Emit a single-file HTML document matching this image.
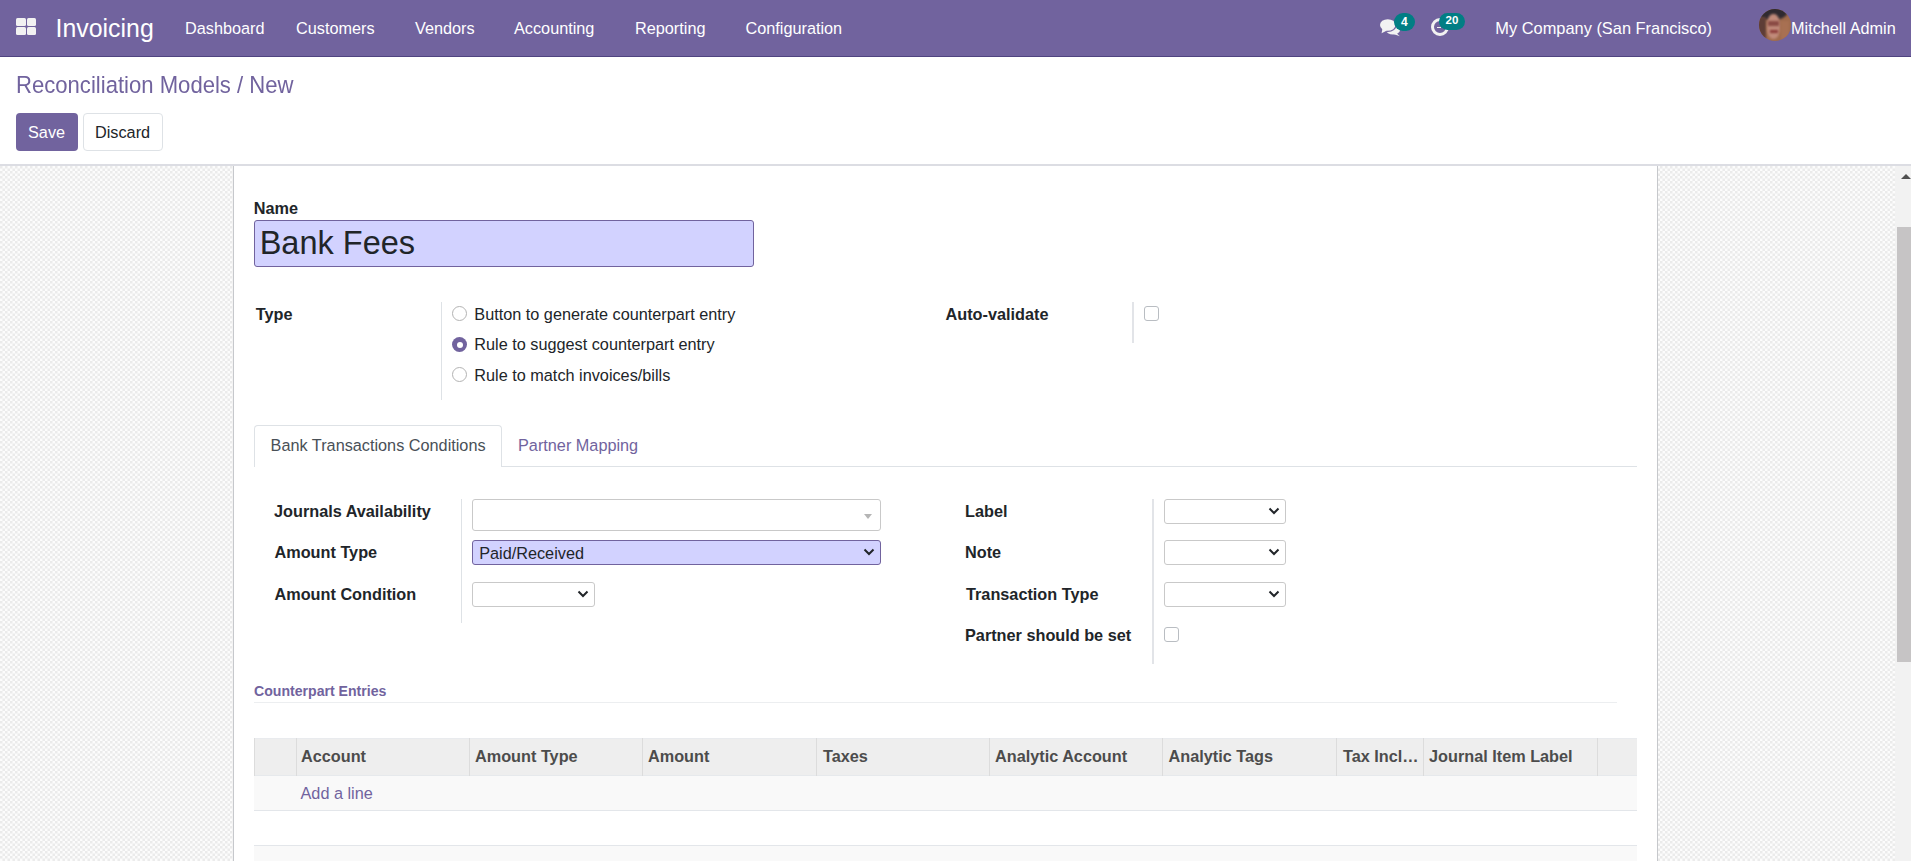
<!DOCTYPE html>
<html><head><meta charset="utf-8">
<style>
*{box-sizing:border-box;margin:0;padding:0}
html,body{width:1911px;height:861px;overflow:hidden;background:#fff;font-family:"Liberation Sans",sans-serif;color:#212529}
.a{position:absolute}
.t{position:absolute;white-space:nowrap;line-height:0}
.nav{position:absolute;left:0;top:0;width:1911px;height:57px;background:#71639e;border-bottom:1px solid #4f4480}
.nav .t{color:#fff;font-size:16.25px}
.cp{position:absolute;left:0;top:57px;width:1911px;height:109px;background:#fff;border-bottom:2px solid #dcdde3}
.content{position:absolute;left:0;top:166px;width:1911px;height:695px;background-color:#f5f5f5}
.sheet{position:absolute;left:233px;top:166px;width:1425px;height:700px;background:#fff;border-left:1px solid #c6c8cc;border-right:1px solid #c6c8cc}
.lbl{font-weight:bold;font-size:16.25px;color:#212529}
.sep{position:absolute;width:1px;background:#dee2e6}
.sel{position:absolute;border:1px solid #c9c9c9;border-radius:3px;background:#fff}
.chev{position:absolute;width:12px;height:8px}
.radio{position:absolute;width:15px;height:15px;border-radius:50%;border:1px solid #b3b3b3;background:#fff}
.chk{position:absolute;width:15px;height:15px;border-radius:3px;border:1px solid #b9bdc2;background:#fff}
</style></head><body>
<div class="nav">
<div class="a" style="left:16px;top:18px;width:9.5px;height:8.3px;background:#f2f2f2;border-radius:1.5px"></div>
<div class="a" style="left:26.5px;top:18px;width:9.5px;height:8.3px;background:#f2f2f2;border-radius:1.5px"></div>
<div class="a" style="left:16px;top:27px;width:9.5px;height:8px;background:#f2f2f2;border-radius:1.5px"></div>
<div class="a" style="left:26.5px;top:27px;width:9.5px;height:8px;background:#f2f2f2;border-radius:1.5px"></div>
<div class="t" style="left:55.5px;top:28px;font-size:24.9px">Invoicing</div>
<div class="t" style="left:185px;top:28px">Dashboard</div>
<div class="t" style="left:296px;top:28px">Customers</div>
<div class="t" style="left:415px;top:28px">Vendors</div>
<div class="t" style="left:514px;top:28px">Accounting</div>
<div class="t" style="left:635px;top:28px">Reporting</div>
<div class="t" style="left:745.5px;top:28px">Configuration</div>
<svg class="a" style="left:1379px;top:18px" width="22" height="19" viewBox="0 0 22 19">
<ellipse cx="14" cy="12.3" rx="7" ry="4.2" fill="#f2f2f2"/>
<path d="M17 14.5 L20.8 18.2 L14.5 16" fill="#f2f2f2"/>
<ellipse cx="8.75" cy="7" rx="8.9" ry="6.9" fill="#71639e"/>
<ellipse cx="8.75" cy="7" rx="7.75" ry="5.85" fill="#f2f2f2"/>
<path d="M3.5 10.5 L2.6 15.2 L8 12.5" fill="#f2f2f2"/>
</svg>
<div class="a" style="left:1394px;top:13px;width:21px;height:18px;border-radius:9px;background:#017e84"></div>
<div class="t" style="left:1401px;top:22px;font-size:12px;font-weight:bold;color:#fff">4</div>
<div class="a" style="left:1430.5px;top:18px;width:18px;height:18px;border-radius:50%;border:3px solid #f2f2f2"></div>
<div class="a" style="left:1436.5px;top:26.5px;width:4px;height:1.5px;background:#f2f2f2"></div>
<div class="a" style="left:1439px;top:13px;width:26px;height:17px;border-radius:8.5px;background:#017e84"></div>
<div class="t" style="left:1445.5px;top:20px;font-size:11.5px;font-weight:bold;color:#fff">20</div>
<div class="t" style="left:1495.3px;top:28px;font-size:16.4px">My Company (San Francisco)</div>
<div class="a" style="left:1759px;top:9px;width:32px;height:32px;border-radius:50%;overflow:hidden;background:#a06b4c">
<div class="a" style="left:-2px;top:-3px;width:30px;height:14px;background:#2f2a30;border-radius:50%;filter:blur(1px)"></div>
<div class="a" style="left:-2px;top:8px;width:9px;height:22px;background:#5e3d36;filter:blur(1.2px)"></div>
<div class="a" style="left:8px;top:5px;width:13px;height:25px;border-radius:45%;background:#c08a7a;filter:blur(1px)"></div>
<div class="a" style="left:9px;top:12px;width:11px;height:5px;background:#8a4a44;filter:blur(1px)"></div>
<div class="a" style="left:11px;top:21px;width:8px;height:3px;background:#8b3a38;filter:blur(1px)"></div>
<div class="a" style="left:22px;top:12px;width:8px;height:18px;background:#a87052;filter:blur(1px)"></div>
</div>
<div class="t" style="left:1791px;top:28px">Mitchell Admin</div>
</div>
<div class="cp">
<div class="t" style="left:16px;top:29px;font-size:22.1px;color:#71639e;transform:scaleY(1.1);transform-origin:0 7px">Reconciliation Models / New</div>
<div class="a" style="left:16px;top:56px;width:62px;height:38px;background:#71639e;border-radius:4px"></div>
<div class="t" style="left:28px;top:75px;font-size:16.25px;color:#fff">Save</div>
<div class="a" style="left:83px;top:56px;width:80px;height:38px;border:1px solid #dee2e6;border-radius:4px"></div>
<div class="t" style="left:95px;top:75px;font-size:16.25px;color:#212529">Discard</div>
</div>
<div class="content">
<svg class="a" style="left:0;top:0" width="1911" height="695"><defs><pattern id="pt" width="5" height="5" patternUnits="userSpaceOnUse"><rect width="5" height="5" fill="#fcfcfc"/><rect x="0" y="0" width="2.5" height="2.5" fill="#ebebeb"/><rect x="2.5" y="2.5" width="2.5" height="2.5" fill="#ebebeb"/></pattern></defs><rect width="1911" height="695" fill="url(#pt)"/></svg>
<div class="a" style="left:1895px;top:0;width:16px;height:695px;background:#f2f2f2"></div>
<div class="a" style="left:1901px;top:8px;width:0;height:0;border-left:5px solid transparent;border-right:5px solid transparent;border-bottom:5px solid #505050"></div>
<div class="a" style="left:1897px;top:61px;width:14px;height:435px;background:#c6c4c5"></div>
</div>
<div class="sheet"></div>
<div class="t lbl" style="left:253.7px;top:208px">Name</div>
<div class="a" style="left:254px;top:220px;width:500px;height:47px;background:#d2d2ff;border:1px solid #71639e;border-radius:3px"></div>
<div class="t" style="left:259.7px;top:243px;font-size:32.5px;color:#212529">Bank Fees</div>

<div class="t lbl" style="left:255.8px;top:314px">Type</div>
<div class="sep" style="left:441px;top:302px;height:98px"></div>
<div class="radio" style="left:452px;top:306px"></div>
<div class="a" style="left:452px;top:337px;width:15px;height:15px;border-radius:50%;background:#71639e"><div class="a" style="left:4.5px;top:4.5px;width:6px;height:6px;border-radius:50%;background:#fff"></div></div>
<div class="radio" style="left:452px;top:367px"></div>
<div class="t" style="left:474.3px;top:314px;font-size:16.25px">Button to generate counterpart entry</div>
<div class="t" style="left:474.3px;top:344px;font-size:16.25px">Rule to suggest counterpart entry</div>
<div class="t" style="left:474.3px;top:375px;font-size:16.25px">Rule to match invoices/bills</div>

<div class="t lbl" style="left:945.5px;top:314px">Auto-validate</div>
<div class="sep" style="left:1132px;top:302px;height:41px;width:2px;background:#e2e4e8"></div>
<div class="chk" style="left:1144px;top:306px"></div>

<div class="a" style="left:254px;top:466px;width:1383px;height:1px;background:#dee2e6"></div>
<div class="a" style="left:254px;top:425px;width:248px;height:42px;background:#fff;border:1px solid #dee2e6;border-bottom:none;border-radius:4px 4px 0 0"></div>
<div class="t" style="left:270.6px;top:445px;font-size:16.25px;color:#495057">Bank Transactions Conditions</div>
<div class="t" style="left:518px;top:445px;font-size:16.25px;color:#71639e">Partner Mapping</div>

<div class="t lbl" style="left:274px;top:511px">Journals Availability</div>
<div class="t lbl" style="left:274.5px;top:552px">Amount Type</div>
<div class="t lbl" style="left:274.5px;top:594px">Amount Condition</div>
<div class="sep" style="left:461px;top:499px;height:124px"></div>
<div class="sel" style="left:472px;top:499px;width:409px;height:32px"></div>
<div class="a" style="left:864px;top:514px;width:0;height:0;border-left:4.5px solid transparent;border-right:4.5px solid transparent;border-top:5px solid #b5b5b5"></div>
<div class="sel" style="left:472px;top:540px;width:409px;height:25px;background:#d2d2ff;border-color:#71639e"></div>
<div class="t" style="left:479.2px;top:553px;font-size:16.25px">Paid/Received</div>
<svg class="chev" style="left:863px;top:548px" viewBox="0 0 12 8"><path d="M1.5 1.5 L6 6 L10.5 1.5" fill="none" stroke="#212529" stroke-width="2"/></svg>
<div class="sel" style="left:472px;top:582px;width:123px;height:25px"></div>
<svg class="chev" style="left:577px;top:590px" viewBox="0 0 12 8"><path d="M1.5 1.5 L6 6 L10.5 1.5" fill="none" stroke="#212529" stroke-width="2"/></svg>

<div class="t lbl" style="left:965px;top:511px">Label</div>
<div class="t lbl" style="left:965px;top:552px">Note</div>
<div class="t lbl" style="left:966px;top:594px">Transaction Type</div>
<div class="t lbl" style="left:965px;top:635px">Partner should be set</div>
<div class="sep" style="left:1152px;top:499px;height:165px;width:2px;background:#e2e4e8"></div>
<div class="sel" style="left:1164px;top:499px;width:122px;height:25px"></div>
<svg class="chev" style="left:1268px;top:507px" viewBox="0 0 12 8"><path d="M1.5 1.5 L6 6 L10.5 1.5" fill="none" stroke="#212529" stroke-width="2"/></svg>
<div class="sel" style="left:1164px;top:540px;width:122px;height:25px"></div>
<svg class="chev" style="left:1268px;top:548px" viewBox="0 0 12 8"><path d="M1.5 1.5 L6 6 L10.5 1.5" fill="none" stroke="#212529" stroke-width="2"/></svg>
<div class="sel" style="left:1164px;top:582px;width:122px;height:25px"></div>
<svg class="chev" style="left:1268px;top:590px" viewBox="0 0 12 8"><path d="M1.5 1.5 L6 6 L10.5 1.5" fill="none" stroke="#212529" stroke-width="2"/></svg>
<div class="chk" style="left:1164px;top:627px"></div>

<div class="t" style="left:254px;top:691px;font-size:14.1px;font-weight:bold;color:#71639e">Counterpart Entries</div>
<div class="a" style="left:254px;top:702px;width:1363px;height:1px;background:#eceef0"></div>

<div class="a" style="left:254px;top:738px;width:1383px;height:38px;background:#eeeeee"></div>
<div class="a" style="left:254px;top:776px;width:1383px;height:34px;background:#f9f9f9"></div>
<div class="a" style="left:254px;top:775px;width:1383px;height:1px;background:#e6e9ec"></div>
<div class="a" style="left:254px;top:738px;width:1383px;height:1px;background:#e9ebee"></div>
<div class="a" style="left:254px;top:810px;width:1383px;height:1px;background:#e3e6ea"></div>
<div class="a" style="left:254px;top:845px;width:1383px;height:1px;background:#e3e6ea"></div>
<div class="a" style="left:254px;top:846px;width:1383px;height:20px;background:#f9f9f9"></div>
<div class="a" style="left:254px;top:738px;width:1px;height:38px;background:#dcdcdc"></div>
<div class="a" style="left:296px;top:738px;width:1px;height:38px;background:#dcdcdc"></div>
<div class="a" style="left:469px;top:738px;width:1px;height:38px;background:#dcdcdc"></div>
<div class="a" style="left:642px;top:738px;width:1px;height:38px;background:#dcdcdc"></div>
<div class="a" style="left:816px;top:738px;width:1px;height:38px;background:#dcdcdc"></div>
<div class="a" style="left:989px;top:738px;width:1px;height:38px;background:#dcdcdc"></div>
<div class="a" style="left:1162px;top:738px;width:1px;height:38px;background:#dcdcdc"></div>
<div class="a" style="left:1336px;top:738px;width:1px;height:38px;background:#dcdcdc"></div>
<div class="a" style="left:1423px;top:738px;width:1px;height:38px;background:#dcdcdc"></div>
<div class="a" style="left:1597px;top:738px;width:1px;height:38px;background:#dcdcdc"></div>
<div class="t" style="left:301px;top:756px;font-size:16.25px;font-weight:bold;color:#4c4c4c">Account</div>
<div class="t" style="left:475px;top:756px;font-size:16.25px;font-weight:bold;color:#4c4c4c">Amount Type</div>
<div class="t" style="left:648px;top:756px;font-size:16.25px;font-weight:bold;color:#4c4c4c">Amount</div>
<div class="t" style="left:823px;top:756px;font-size:16.25px;font-weight:bold;color:#4c4c4c">Taxes</div>
<div class="t" style="left:995px;top:756px;font-size:16.25px;font-weight:bold;color:#4c4c4c">Analytic Account</div>
<div class="t" style="left:1168.5px;top:756px;font-size:16.25px;font-weight:bold;color:#4c4c4c">Analytic Tags</div>
<div class="t" style="left:1343px;top:756px;font-size:16.25px;font-weight:bold;color:#4c4c4c">Tax Incl…</div>
<div class="t" style="left:1429px;top:756px;font-size:16.25px;font-weight:bold;color:#4c4c4c">Journal Item Label</div>
<div class="t" style="left:300.5px;top:793px;font-size:16.25px;color:#71639e">Add a line</div>

</body></html>
